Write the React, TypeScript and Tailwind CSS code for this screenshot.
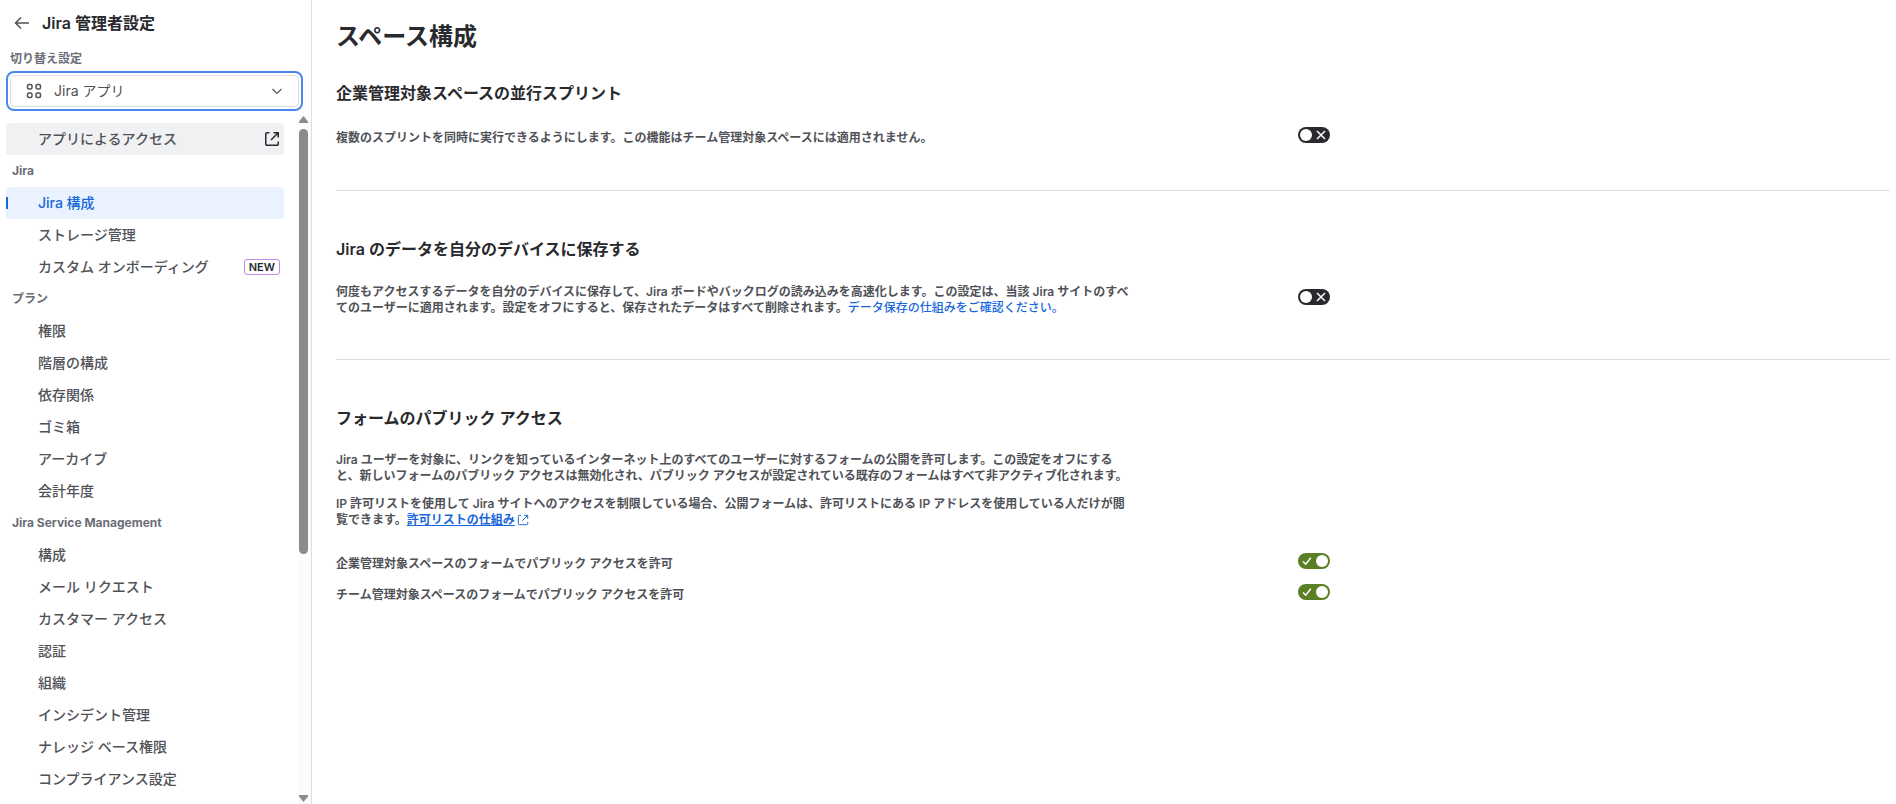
import { useState } from "react";

type Item = { label: string; active?: boolean; badge?: string };
type Group = { title: string; items: Item[] };

const GROUPS: Group[] = [
  {
    title: "Jira",
    items: [
      { label: "Jira 構成", active: true },
      { label: "ストレージ管理" },
      { label: "カスタム オンボーディング", badge: "NEW" },
    ],
  },
  {
    title: "プラン",
    items: [
      { label: "権限" },
      { label: "階層の構成" },
      { label: "依存関係" },
      { label: "ゴミ箱" },
      { label: "アーカイブ" },
      { label: "会計年度" },
    ],
  },
  {
    title: "Jira Service Management",
    items: [
      { label: "構成" },
      { label: "メール リクエスト" },
      { label: "カスタマー アクセス" },
      { label: "認証" },
      { label: "組織" },
      { label: "インシデント管理" },
      { label: "ナレッジ ベース権限" },
      { label: "コンプライアンス設定" },
    ],
  },
];

export default function App() {
  return (
    <div
      lang="ja"
      className="flex h-screen overflow-hidden bg-white font-['Inter','Noto_Sans_CJK_JP',sans-serif] text-[#292a2e]"
    >
      <Sidebar />
      <main className="min-w-0 flex-1 overflow-hidden pt-[21px] pr-1.5 pl-6">
        <h1 className="text-2xl leading-8 font-bold">スペース構成</h1>

        <section className="border-b border-[#dddee1] pt-7 pb-11">
          <SectionTitle>企業管理対象スペースの並行スプリント</SectionTitle>
          <div className="mt-[19px]">
            <SettingRow label="企業管理対象スペースの並行スプリント">
              複数のスプリントを同時に実行できるようにします。この機能はチーム管理対象スペースには適用されません。
            </SettingRow>
          </div>
        </section>

        <section className="border-b border-[#dddee1] pt-[46px] pb-[43px]">
          <SectionTitle>Jira のデータを自分のデバイスに保存する</SectionTitle>
          <div className="mt-[17px]">
            <SettingRow label="Jira のデータを自分のデバイスに保存する">
              何度もアクセスするデータを自分のデバイスに保存して、Jira ボードやバックログの読み込みを高速化します。この設定は、当該 Jira サイトのすべてのユーザーに適用されます。設定をオフにすると、保存されたデータはすべて削除されます。
              <a href="#storage" className="font-medium text-[#1868db]">
                データ保存の仕組みをご確認ください。
              </a>
            </SettingRow>
          </div>
        </section>

        <section className="pt-[46px]">
          <SectionTitle>フォームのパブリック アクセス</SectionTitle>
          <div className="mt-[22px] max-w-[797px] space-y-3 text-xs leading-4 font-semibold text-[#505258]">
            <p>
              Jira ユーザーを対象に、リンクを知っているインターネット上のすべてのユーザーに対するフォームの公開を許可します。この設定をオフにすると、新しいフォームのパブリック アクセスは無効化され、パブリック アクセスが設定されている既存のフォームはすべて非アクティブ化されます。
            </p>
            <p>
              IP 許可リストを使用して Jira サイトへのアクセスを制限している場合、公開フォームは、許可リストにある IP アドレスを使用している人だけが閲覧できます。
              <a href="#allowlist" className="text-[#1868db]">
                <span className="underline">許可リストの仕組み</span>
                <LinkExternal className="ml-0.5 inline size-3 align-[-2px]" strokeWidth={1.3} />
              </a>
            </p>
          </div>
          <div className="mt-[22px] space-y-[9px]">
            <SettingRow label="企業管理対象スペースのフォーム" on>
              企業管理対象スペースのフォームでパブリック アクセスを許可
            </SettingRow>
            <SettingRow label="チーム管理対象スペースのフォーム" on>
              チーム管理対象スペースのフォームでパブリック アクセスを許可
            </SettingRow>
          </div>
        </section>
      </main>
    </div>
  );
}

function Sidebar() {
  return (
    <aside className="flex w-78 shrink-0 flex-col border-r border-[#dddee1]">
      <div className="flex items-center gap-3 pt-[11px] pl-3.5">
        <button type="button" aria-label="戻る" className="text-[#505258]">
          <svg viewBox="0 0 16 16" fill="none" stroke="currentColor" strokeWidth="1.5" className="size-4">
            <path d="M7 2.5 1.5 8 7 13.5M1.5 8H15" />
          </svg>
        </button>
        <h2 className="text-base leading-6 font-semibold">Jira 管理者設定</h2>
      </div>

      <div className="mt-4 px-1.5">
        <span id="switch-label" className="block pl-1 text-xs leading-4 font-semibold text-[#6b6e76]">
          切り替え設定
        </span>
        <button
          type="button"
          aria-labelledby="switch-label switch-value"
          className="mt-1 flex w-[297px] rounded-lg border-2 border-[#4688ec] p-0.5"
        >
          <span className="flex h-8 flex-1 items-center rounded border border-[#dddee1] pr-[13px] pl-[15px] text-[#505258]">
            <svg viewBox="0 0 16 16" fill="none" stroke="currentColor" strokeWidth="1.5" className="size-4">
              <rect x="1.5" y="1.5" width="4.5" height="4.5" rx="1.5" />
              <rect x="10" y="1.5" width="4.5" height="4.5" rx="1.5" />
              <rect x="1.5" y="10" width="4.5" height="4.5" rx="1.5" />
              <rect x="10" y="10" width="4.5" height="4.5" rx="1.5" />
            </svg>
            <span id="switch-value" className="ml-3 flex-1 text-left text-sm">
              Jira アプリ
            </span>
            <svg viewBox="0 0 16 16" fill="none" stroke="currentColor" strokeWidth="1.1" className="size-4">
              <path d="m3.5 6 4.5 4.5L12.5 6" />
            </svg>
          </span>
        </button>
      </div>

      <div className="mt-1 flex min-h-0 flex-1">
        <nav className="min-w-0 flex-1 overflow-hidden pt-2 pr-3.5 pl-1.5">
          <a
            href="#access"
            className="flex h-8 items-center justify-between rounded bg-[#f0f1f2] pr-1 pl-8 text-sm font-medium text-[#505258]"
          >
            アプリによるアクセス
            <LinkExternal className="size-4 text-[#292a2e]" />
          </a>
          {GROUPS.map((group) => (
            <div key={group.title}>
              <h3 className="pl-1.5 text-xs leading-8 font-bold text-[#6b6e76]">{group.title}</h3>
              <ul>
                {group.items.map((item) => (
                  <NavItem key={item.label} item={item} />
                ))}
              </ul>
            </div>
          ))}
        </nav>
        <div className="flex w-[13px] flex-col items-center bg-[#fcfcfc] pt-px pr-[3px] pb-0.5 pl-px text-[#8b8b8b]">
          <svg viewBox="0 0 9 7" fill="currentColor" className="h-[7px] w-[9px]">
            <path d="M4.5 0 9 5.5V7H0V5.5Z" />
          </svg>
          <div className="mt-1.5 h-[62%] w-[9px] rounded-full bg-[#8b8b8b]" />
          <svg viewBox="0 0 9 7" fill="currentColor" className="mt-auto h-[7px] w-[9px]">
            <path d="M4.5 7 9 1.5V0H0V1.5Z" />
          </svg>
        </div>
      </div>
    </aside>
  );
}

function NavItem({ item }: { item: Item }) {
  return (
    <li>
      <a
        href="#item"
        aria-current={item.active ? "page" : undefined}
        className={
          item.active
            ? "flex h-8 items-center rounded bg-[#e9f2fe] text-sm font-medium text-[#1868db]"
            : "flex h-8 items-center rounded text-sm font-medium text-[#505258]"
        }
      >
        <span className={item.active ? "mr-[30px] h-3 w-0.5 bg-[#1868db]" : "mr-[30px] w-0.5"} />
        {item.label}
        {item.badge && (
          <span className="mr-1 ml-auto rounded-[3px] border border-[#c08ae8] px-1 text-[11px] leading-[14px] font-semibold text-[#292a2e]">
            {item.badge}
          </span>
        )}
      </a>
    </li>
  );
}

function SectionTitle({ children }: { children: React.ReactNode }) {
  return <h2 className="text-base leading-6 font-semibold">{children}</h2>;
}

function SettingRow({
  label,
  on,
  children,
}: {
  label: string;
  on?: boolean;
  children: React.ReactNode;
}) {
  return (
    <div className="grid grid-cols-[61.9%_1fr] items-center">
      <p className="max-w-[797px] pt-1.5 text-xs leading-4 font-semibold text-[#505258]">{children}</p>
      <Toggle label={label} defaultOn={on} />
    </div>
  );
}

function Toggle({ label, defaultOn = false }: { label: string; defaultOn?: boolean }) {
  const [on, setOn] = useState(defaultOn);

  return (
    <button
      type="button"
      role="switch"
      aria-checked={on}
      aria-label={label}
      onClick={() => setOn(!on)}
      className={
        on
          ? "flex h-4 w-8 flex-row-reverse items-center justify-between rounded-full bg-[#5b7f24] pr-0.5 pl-1"
          : "flex h-4 w-8 items-center justify-between rounded-full bg-[#292a2e] pr-1 pl-0.5"
      }
    >
      <span className="size-3 rounded-full bg-white" />
      <svg viewBox="0 0 10 10" fill="none" stroke="white" strokeWidth="1.5" className="size-2.5">
        <path d={on ? "M1 5.5 3.7 8.2 8.8 1.8" : "M1 1 9 9M9 1 1 9"} />
      </svg>
    </button>
  );
}

function LinkExternal({
  className,
  strokeWidth = 1.5,
}: {
  className?: string;
  strokeWidth?: number;
}) {
  return (
    <svg viewBox="0 0 16 16" fill="none" stroke="currentColor" strokeWidth={strokeWidth} className={className}>
      <path d="M5.5 1.75H3A1.25 1.25 0 0 0 1.75 3v10A1.25 1.25 0 0 0 3 14.25h10A1.25 1.25 0 0 0 14.25 13v-2.5M9.5 1.75h4.75V6.5M14.25 1.75 7 9" />
    </svg>
  );
}
